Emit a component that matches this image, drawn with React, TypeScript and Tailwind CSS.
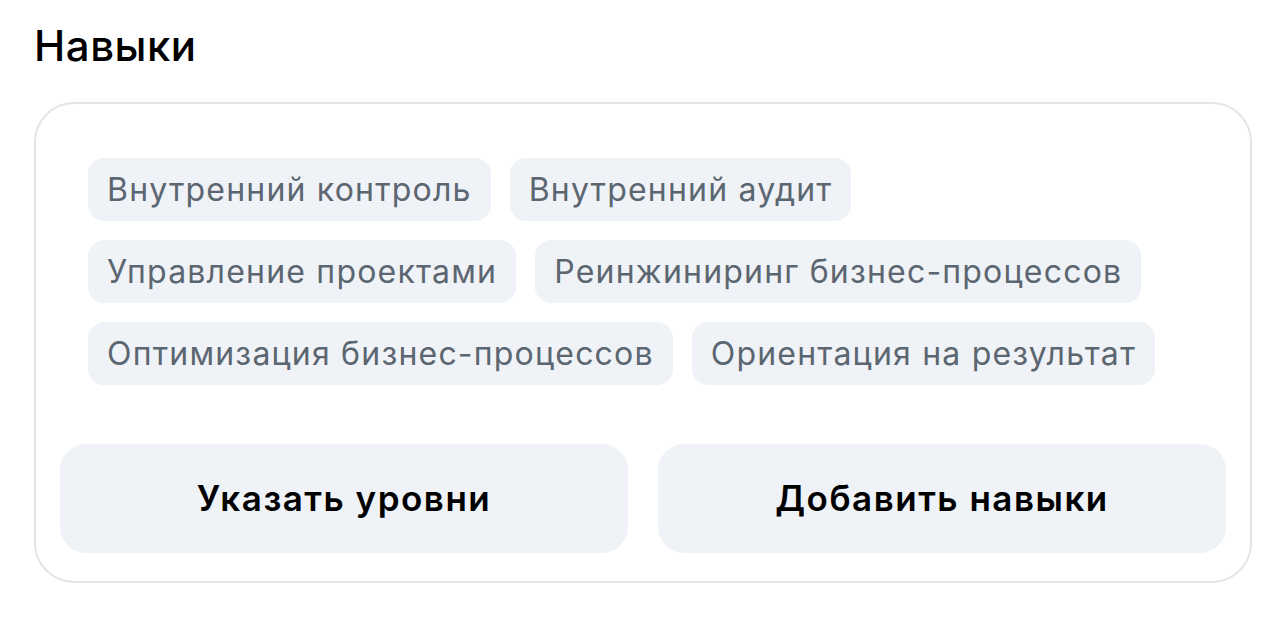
const skills = [
  "Внутренний контроль",
  "Внутренний аудит",
  "Управление проектами",
  "Реинжиниринг бизнес-процессов",
  "Оптимизация бизнес-процессов",
  "Ориентация на результат",
];

export default function App() {
  return (
    <div
      className="min-h-screen bg-white px-[34px] pt-[21px]"
      style={{ fontFamily: "Inter, 'Liberation Sans', sans-serif" }}
    >
      <h2 className="text-[42px] font-medium leading-[50px] tracking-[0.5px] text-black">Навыки</h2>
      <div className="mt-[31px] w-[1218px] rounded-[40px] border-2 border-[#e2e5e9] px-[24px] pb-[28px] pt-[54px]">
        <div className="flex w-[1120px] flex-wrap gap-x-[19px] gap-y-[19px] pl-[28px]">
          {skills.map((s) => (
            <span
              key={s}
              className="rounded-[16px] bg-[#eff2f6] px-[19px] py-[12px] text-[32px] leading-[39px] tracking-[1.2px] text-[#5b6670]"
            >
              {s}
            </span>
          ))}
        </div>
        <div className="mt-[59px] grid grid-cols-2 gap-[30px]">
          <button className="h-[109px] rounded-[26px] bg-[#eff2f7] text-[35px] font-semibold tracking-[1.5px] text-black">
            Указать уровни
          </button>
          <button className="h-[109px] rounded-[26px] bg-[#eff2f7] text-[35px] font-semibold tracking-[1.5px] text-black">
            Добавить навыки
          </button>
        </div>
      </div>
    </div>
  );
}
